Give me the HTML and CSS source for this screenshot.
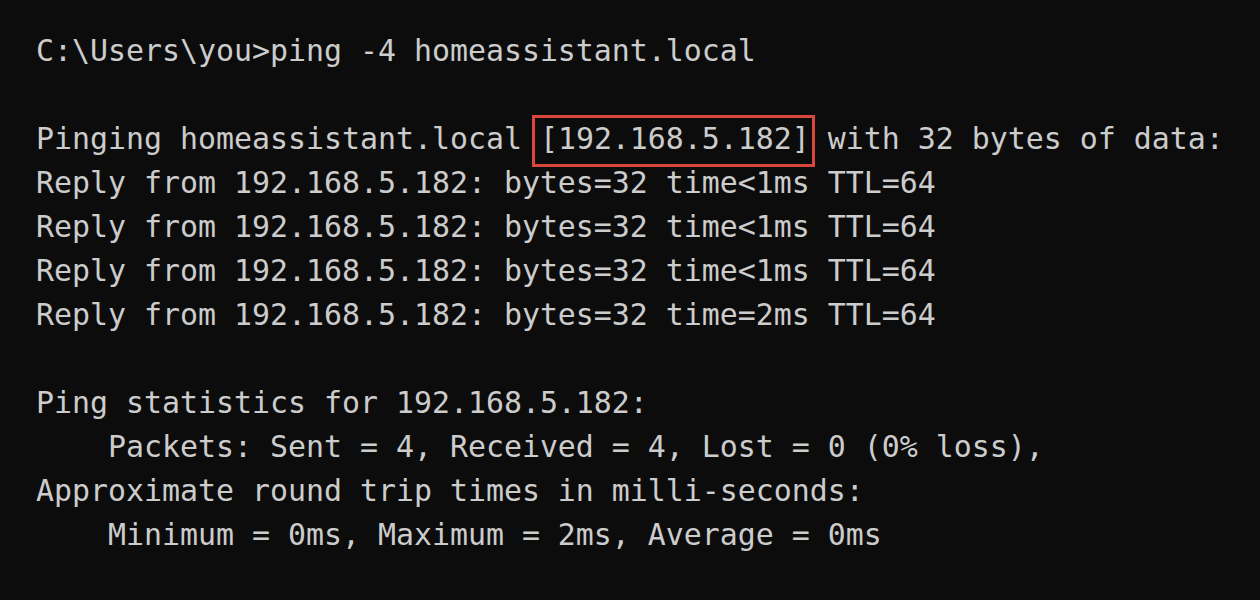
FILE: index.html
```html
<!DOCTYPE html>
<html>
<head>
<meta charset="utf-8">
<link rel="stylesheet" href="styles.css">
</head>
<body>
<pre class="term">C:\Users\you&gt;ping -4 homeassistant.local

Pinging homeassistant.local <span class="hl">[192.168.5.182]</span> with 32 bytes of data:
Reply from 192.168.5.182: bytes=32 time&lt;1ms TTL=64
Reply from 192.168.5.182: bytes=32 time&lt;1ms TTL=64
Reply from 192.168.5.182: bytes=32 time&lt;1ms TTL=64
Reply from 192.168.5.182: bytes=32 time=2ms TTL=64

Ping statistics for 192.168.5.182:
    Packets: Sent = 4, Received = 4, Lost = 0 (0% loss),
Approximate round trip times in milli-seconds:
    Minimum = 0ms, Maximum = 2ms, Average = 0ms</pre>
</body>
</html>
```
FILE: styles.css
```css
html, body {
  margin: 0;
  padding: 0;
  background: #0c0c0c;
  height: 100%;
  overflow: hidden;
}
.term {
  margin: 0;
  padding: 29px 0 0 36px;
  font-family: "DejaVu Sans Mono", "Liberation Mono", monospace;
  font-size: 29.9px;
  line-height: 44px;
  color: #cccccc;
  white-space: pre;
}
.hl {
  position: relative;
}
.hl::after {
  content: "";
  position: absolute;
  left: -8px;
  right: -5px;
  top: -6px;
  bottom: -11px;
  border: 3px solid #d9463b;
}
```
